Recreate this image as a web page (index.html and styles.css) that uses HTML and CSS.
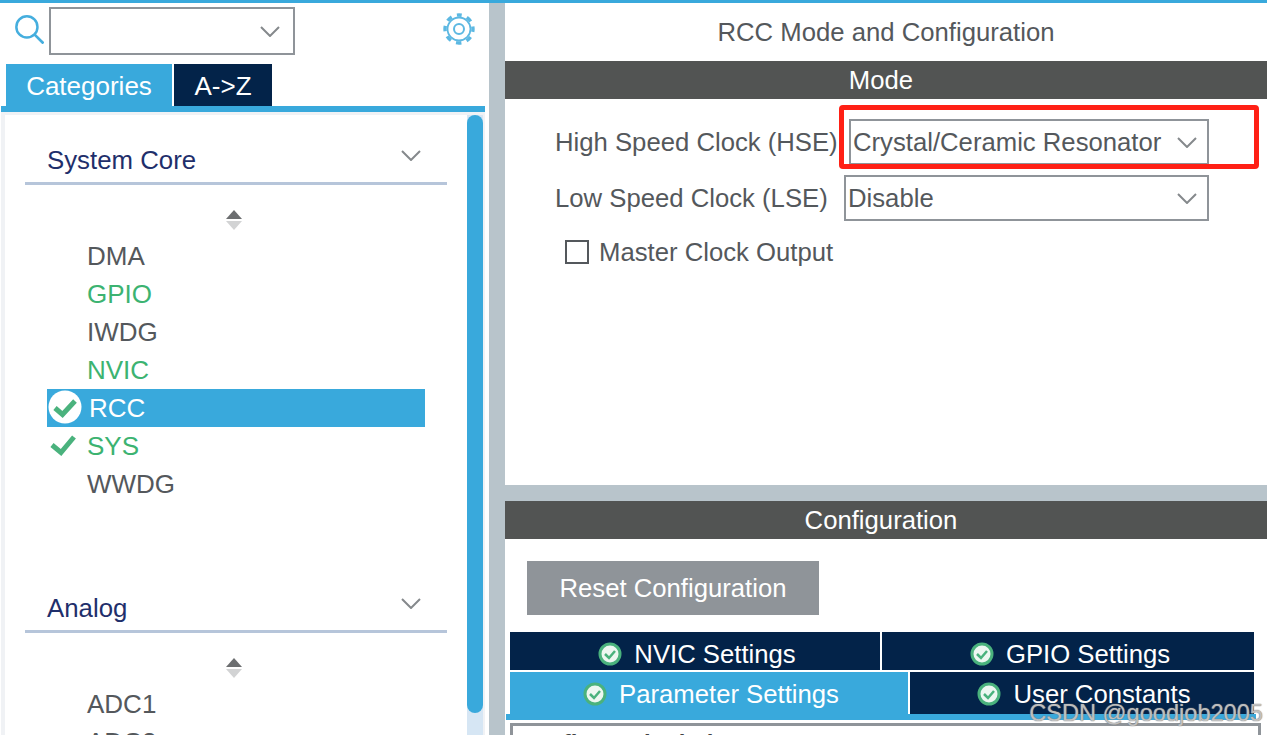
FILE: index.html
```html
<!DOCTYPE html>
<html lang="en">
<head>
  <meta charset="UTF-8">
  <title>RCC Mode and Configuration</title>
  <link rel="stylesheet" href="styles.css">
</head>
<body>
  <div id="app">
    <!-- Left: categories tree -->
    <div class="nav">
      <div class="search-row">
        <svg class="search-icon" viewBox="0 0 28 28"><circle cx="11.500" cy="11.500" r="10.200" fill="none" stroke="#45aede" stroke-width="2.400"/><path d="M18.500 18.500l9 9" stroke="#45aede" stroke-width="2.600"/></svg>
        <div class="search-box">
          <svg class="chev" viewBox="0 0 20 11"><path d="M1 1l9 9 9-9" fill="none" stroke="#85898c" stroke-width="2"/></svg>
        </div>
        <svg class="gear-icon" viewBox="0 0 32 32"><g fill="none" stroke="#5cb8e2"><circle cx="16" cy="16" r="5" stroke-width="2"/><circle cx="16" cy="16" r="11.500" stroke-width="1.800"/><circle cx="16" cy="16" r="14" stroke-width="3.400" stroke-dasharray="5.500 5.500" stroke-dashoffset="2.750" transform="rotate(-90 16 16)"/></g></svg>
      </div>
      <div class="nav-tabs">
        <div class="nav-tab active">Categories</div>
        <div class="nav-tab">A-&gt;Z</div>
      </div>
      <div class="nav-body">
        <div class="tree">
          <div class="group-head">
            <span>System Core</span>
            <svg class="chev" viewBox="0 0 20 11"><path d="M1 1l9 9 9-9" fill="none" stroke="#85898c" stroke-width="2"/></svg>
          </div>
          <div class="sorter"><i class="up"></i><i class="down"></i></div>
          <ul class="items">
            <li>DMA</li>
            <li class="ok">GPIO</li>
            <li>IWDG</li>
            <li class="ok">NVIC</li>
            <li class="selected">
              <svg class="item-mark" viewBox="0 0 34 34"><circle cx="17" cy="17" r="16.500" fill="#fff"/><path d="M7 18l7.500 6.500L27 11" fill="none" stroke="#4ab27d" stroke-width="5"/></svg>
              RCC
            </li>
            <li class="ok">
              <svg class="item-mark small" viewBox="0 0 26 22"><path d="M2 11l9 7.500L24 3" fill="none" stroke="#4ab27d" stroke-width="5"/></svg>
              SYS
            </li>
            <li>WWDG</li>
          </ul>
          <div class="group-head second">
            <span>Analog</span>
            <svg class="chev" viewBox="0 0 20 11"><path d="M1 1l9 9 9-9" fill="none" stroke="#85898c" stroke-width="2"/></svg>
          </div>
          <div class="sorter"><i class="up"></i><i class="down"></i></div>
          <ul class="items">
            <li>ADC1</li>
            <li>ADC2</li>
          </ul>
        </div>
        <div class="scroll-track"><div class="scroll-thumb"></div></div>
      </div>
    </div>

    <div class="splitter"></div>

    <!-- Right: mode and configuration -->
    <div class="detail">
      <div class="detail-title">RCC Mode and Configuration</div>
      <div class="bar">Mode</div>
      <div class="mode-body">
        <div class="field hse">
          <label>High Speed Clock (HSE)</label>
          <div class="select">Crystal/Ceramic Resonator
            <svg class="chev" viewBox="0 0 20 11"><path d="M1 1l9 9 9-9" fill="none" stroke="#85898c" stroke-width="2"/></svg>
          </div>
        </div>
        <div class="field lse">
          <label>Low Speed Clock (LSE)</label>
          <div class="select">Disable
            <svg class="chev" viewBox="0 0 20 11"><path d="M1 1l9 9 9-9" fill="none" stroke="#85898c" stroke-width="2"/></svg>
          </div>
        </div>
        <div class="check-row">
          <span class="checkbox"></span>
          <span>Master Clock Output</span>
        </div>
      </div>
      <div class="h-splitter"></div>
      <div class="bar">Configuration</div>
      <div class="config-body">
        <button class="reset-btn">Reset Configuration</button>
        <div class="cfg-row first">
          <div class="cfg-tab nvic"><svg class="tab-mark" viewBox="0 0 24 24"><circle cx="12" cy="12" r="10" fill="#edf7f1" stroke="#4ab27d" stroke-width="3"/><path d="M7 12l4 4 6-7" fill="none" stroke="#4ab27d" stroke-width="2.500"/></svg>NVIC Settings</div>
          <div class="cfg-tab gpio"><svg class="tab-mark" viewBox="0 0 24 24"><circle cx="12" cy="12" r="10" fill="#edf7f1" stroke="#4ab27d" stroke-width="3"/><path d="M7 12l4 4 6-7" fill="none" stroke="#4ab27d" stroke-width="2.500"/></svg>GPIO Settings</div>
        </div>
        <div class="cfg-row second">
          <div class="cfg-tab param active"><svg class="tab-mark" viewBox="0 0 24 24"><circle cx="12" cy="12" r="10" fill="#edf7f1" stroke="#4ab27d" stroke-width="3"/><path d="M7 12l4 4 6-7" fill="none" stroke="#4ab27d" stroke-width="2.500"/></svg>Parameter Settings</div>
          <div class="cfg-tab user"><svg class="tab-mark" viewBox="0 0 24 24"><circle cx="12" cy="12" r="10" fill="#edf7f1" stroke="#4ab27d" stroke-width="3"/><path d="M7 12l4 4 6-7" fill="none" stroke="#4ab27d" stroke-width="2.500"/></svg>User Constants</div>
        </div>
        <div class="tab-line"></div>
        <div class="params-box">Configure the below parameters:</div>
      </div>
    </div>
  </div>

  <!-- annotation and watermark drawn over the screenshot -->
  <div class="red-box"></div>
  <div class="watermark">CSDN @goodjob2005</div>
</body>
</html>
```

FILE: styles.css
```css
html, body {
  margin: 0;
  padding: 0;
  height: 735px;
  overflow: hidden;
  background: #fff;
  font-family: "Liberation Sans", Arial, sans-serif;
}
#app {
  display: flex;
  height: 735px;
  box-sizing: border-box;
  border-top: 3px solid #39a9dc;
  overflow: hidden;
}
.chev {
  width: 20px;
  height: 11px;
  display: block;
}

/* left panel */
.nav {
  width: 489px;
  flex-shrink: 0;
  display: flex;
  flex-direction: column;
}
.search-row {
  display: flex;
  align-items: flex-start;
  height: 61px;
  padding-left: 15px;
  box-sizing: border-box;
}
.search-icon {
  width: 29px;
  height: 29px;
  margin-top: 12px;
}
.search-box {
  width: 246px;
  height: 48px;
  box-sizing: border-box;
  margin: 4px 0 0 5px;
  border: 2px solid #8f9499;
  display: flex;
  align-items: center;
  justify-content: flex-end;
  padding: 0 13px 0 0;
}
.gear-icon {
  width: 32px;
  height: 32px;
  margin: 10px 0 0 148px;
}
.nav-tabs {
  display: flex;
  gap: 2px;
  height: 42px;
  margin-left: 6px;
}
.nav-tab {
  width: 98px;
  background: #032349;
  color: #fff;
  font-size: 26px;
  line-height: 44px;
  text-align: center;
}
.nav-tab.active {
  width: 166px;
  background: #39a9dc;
}
.nav-body {
  flex: 1;
  min-height: 0;
  display: flex;
  margin: 0 4px 0 1px;
  background: #f0f2f5;
  padding: 3px 2px 0 4px;
  border-top: 6px solid #39a9dc;
}
.tree {
  flex: 1;
  background: #fff;
  padding: 0 20px;
  overflow: hidden;
}
.group-head {
  display: flex;
  justify-content: space-between;
  align-items: flex-start;
  height: 70px;
  box-sizing: border-box;
  padding: 29px 26px 0 22px;
  border-bottom: 3px solid #b6c5da;
  color: #1f2f6b;
  font-size: 25.8px;
  line-height: 32px;
}
.group-head .chev {
  margin-top: 6px;
}
.group-head.second {
  margin-top: 60px;
}
.sorter {
  height: 52px;
  display: flex;
  flex-direction: column;
  align-items: center;
  padding: 25px 4px 0 0;
  box-sizing: border-box;
  gap: 2px;
}
.sorter i {
  display: block;
  width: 0;
  height: 0;
  border-left: 8px solid transparent;
  border-right: 8px solid transparent;
}
.sorter .up {
  border-bottom: 9px solid #6c6e70;
}
.sorter .down {
  border-top: 9px solid #d2d3d4;
}
.items {
  list-style: none;
  margin: 0;
  padding: 0 22px;
}
.items li {
  height: 38px;
  line-height: 38px;
  font-size: 26px;
  color: #54585c;
  padding-left: 40px;
  display: flex;
  align-items: center;
  position: relative;
}
.items li.ok {
  color: #3cb371;
}
.items li.selected {
  background: #39a9dc;
  color: #fff;
  padding-left: 42px;
}
.item-mark {
  position: absolute;
  left: 1px;
  top: 1px;
  width: 34px;
  height: 34px;
}
.item-mark.small {
  left: 3px;
  top: 7px;
  width: 26px;
  height: 22px;
}
.scroll-track {
  width: 16px;
  flex-shrink: 0;
  background: #d6e6f4;
}
.scroll-thumb {
  height: 598px;
  background: #39a9dc;
  border-radius: 8px;
}
.splitter {
  width: 16px;
  flex-shrink: 0;
  background: #b8c4cb;
}

/* right panel */
.detail {
  flex: 1;
  min-width: 0;
  display: flex;
  flex-direction: column;
}
.detail-title {
  height: 58px;
  line-height: 58px;
  text-align: center;
  font-size: 25.7px;
  color: #54585c;
}
.bar {
  height: 38px;
  line-height: 38px;
  flex-shrink: 0;
  background: #525453;
  color: #fff;
  font-size: 25.7px;
  text-align: center;
  padding-right: 10px;
}
.mode-body {
  height: 386px;
  flex-shrink: 0;
  box-sizing: border-box;
  padding: 20px 0 0 50px;
  color: #54585c;
  font-size: 25.7px;
}
.field {
  display: flex;
  align-items: center;
  height: 46px;
}
.field label {
  white-space: nowrap;
}
.select {
  box-sizing: border-box;
  height: 46px;
  border: 2px solid #8f9499;
  display: flex;
  align-items: center;
  justify-content: space-between;
  padding: 0 10px 0 2px;
  white-space: nowrap;
}
.field.hse label {
  width: 294px;
}
.field.hse .select {
  width: 360px;
}
.field.lse {
  margin-top: 10px;
}
.field.lse label {
  width: 289px;
}
.field.lse .select {
  width: 365px;
}
.check-row {
  display: flex;
  align-items: center;
  gap: 10px;
  margin: 9px 0 0 10px;
  height: 44px;
}
.checkbox {
  width: 24px;
  height: 24px;
  box-sizing: border-box;
  border: 2px solid #54585c;
}
.h-splitter {
  height: 16px;
  flex-shrink: 0;
  background: #b8c4cb;
}
.config-body {
  flex: 1;
  min-height: 0;
  overflow: hidden;
  padding-top: 22px;
  box-sizing: border-box;
}
.reset-btn {
  display: block;
  width: 292px;
  height: 54px;
  margin-left: 22px;
  border: none;
  padding: 0;
  background: #8f9499;
  color: #fff;
  font-family: inherit;
  font-size: 25.7px;
}
.cfg-row {
  display: flex;
  gap: 2px;
  width: 744px;
  margin-left: 5px;
}
.cfg-row.first {
  height: 38px;
  margin-top: 17px;
  margin-bottom: 2px;
}
.cfg-row.second {
  height: 42px;
}
.cfg-tab {
  background: #032349;
  color: #fff;
  font-size: 25.7px;
  display: flex;
  align-items: center;
  justify-content: center;
  gap: 12px;
  box-sizing: border-box;
  padding-left: 4px;
}
.first .cfg-tab {
  padding-top: 6px;
}
.second .cfg-tab {
  padding-top: 2px;
}
.cfg-tab.nvic {
  width: 370px;
}
.cfg-tab.gpio {
  width: 372px;
}
.cfg-tab.param {
  width: 398px;
}
.cfg-tab.user {
  width: 344px;
}
.cfg-tab.active {
  background: #39a9dc;
}
.tab-mark {
  width: 24px;
  height: 24px;
  flex-shrink: 0;
}
.tab-line {
  height: 6px;
  width: 750px;
  margin-left: 1px;
  background: #39a9dc;
}
.params-box {
  margin: 3px 6px 0 5px;
  border: 3px solid #8f9499;
  padding: 4px 3px;
  height: 60px;
  font-size: 24px;
  font-weight: bold;
  color: #444;
}

/* overlays */
.red-box {
  position: absolute;
  left: 839px;
  top: 105px;
  width: 420px;
  height: 64px;
  box-sizing: border-box;
  border: 5px solid #ff2015;
  border-radius: 4px;
}
.watermark {
  position: absolute;
  right: 4px;
  top: 699px;
  font-size: 23.6px;
  line-height: 28px;
  white-space: nowrap;
  color: rgba(255,255,255,0.55);
  text-shadow: 0 0 1px #777, 0 0 1px #777;
}
```
